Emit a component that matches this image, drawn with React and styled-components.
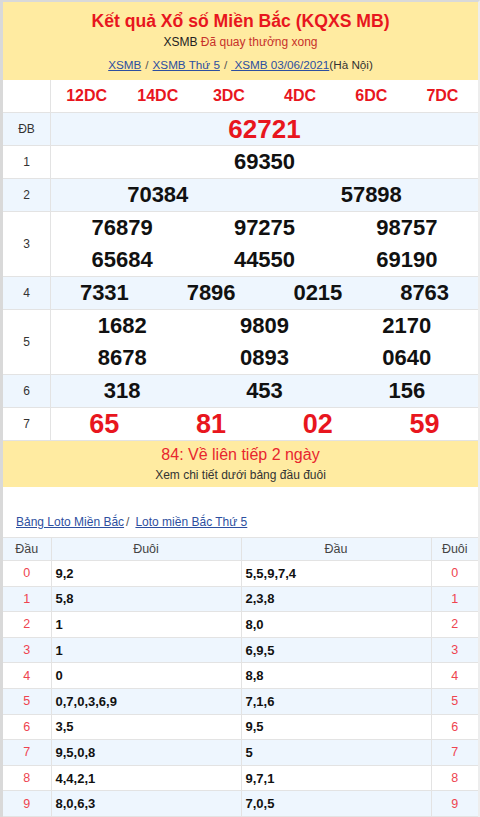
import React from 'react'
import styled, { createGlobalStyle } from 'styled-components'

const GlobalStyle = createGlobalStyle`
  html, body { margin: 0; padding: 0; background: #fff; }
  body { font-family: "Liberation Sans", Arial, sans-serif; color: #222; }
`

const Frame = styled.div`
  width: 480px;
  height: 817px;
  box-sizing: border-box;
  border-left: 3px solid #d9d9d9;
  border-top: 2px solid #d9d9d9;
  border-right: 2px solid #ededed;
  overflow: hidden;
`

const Head = styled.div`
  background: #ffeba1;
  text-align: center;
  padding: 8px 0 4px;
`

const Title = styled.h1`
  margin: 0;
  font-size: 17.6px;
  line-height: 22px;
  font-weight: bold;
  color: #e8161e;
`

const Sub = styled.div`
  font-size: 12px;
  line-height: 20px;
  color: #222;
  span { color: #c7312a; }
`

const Crumbs = styled.div`
  margin-top: 2px;
  font-size: 11.7px;
  line-height: 22px;
  color: #333;
  a { color: #2d4fa0; text-decoration: underline; }
  i { font-style: normal; color: #555; margin: 0 4px; }
`

const Table = styled.table`
  width: 100%;
  border-collapse: collapse;
  table-layout: fixed;
  td { border: 1px solid #e3e3e3; padding: 0; }
  tr:first-child td { border-top: none; }
  td:first-child { border-left: none; }
  td:last-child { border-right: none; }
`

const Row = styled.tr`
  background: ${p => (p.$alt ? '#eef6fe' : '#fff')};
`

const Label = styled.td`
  width: 47px;
  text-align: center;
  font-size: 12px;
  color: #333;
`

const Nums = styled.div`
  display: grid;
  grid-template-columns: repeat(${p => p.$cols}, 1fr);
  text-align: center;
  font-weight: bold;
  font-size: ${p => p.$size || 22}px;
  line-height: ${p => p.$lh || 32}px;
  color: ${p => (p.$red ? '#e8161e' : '#111')};
`

const Note = styled.div`
  background: #ffeba1;
  text-align: center;
  padding: 4px 0 1px;
  strong { display: block; font-weight: normal; font-size: 16px; line-height: 20px; color: #e8262e; }
  small { display: block; font-size: 12px; line-height: 21px; color: #333; }
`

const LotoLinks = styled.div`
  margin: 26px 0 6px 13px;
  font-size: 12px;
  line-height: 18px;
  color: #555;
  a { color: #2d4fa0; text-decoration: underline; }
  i { font-style: normal; margin: 0 6px 0 2px; }
`

const Loto = styled.table`
  width: 100%;
  border-collapse: collapse;
  table-layout: fixed;
  td, th { border: 1px solid #e3e3e3; padding: 0; font-size: 12.5px; }
  td:first-child, th:first-child { border-left: none; }
  td:last-child, th:last-child { border-right: none; }
  th { height: 22px; font-weight: normal; color: #444; background: #eef6fe; }
`

const LotoRow = styled.tr`
  background: ${p => (p.$alt ? '#eef6fe' : '#fff')};
  height: 25.6px;
`

const Idx = styled.td`
  text-align: center;
  color: #ee4450;
`

const Val = styled.td`
  padding-left: 4px !important;
  font-weight: bold;
  font-size: 13px !important;
  color: #111;
`

const dc = ['12DC', '14DC', '3DC', '4DC', '6DC', '7DC']

const prizes = [
  { label: 'ĐB', cols: 1, nums: ['62721'], red: true, size: 26, alt: true },
  { label: '1', cols: 1, nums: ['69350'] },
  { label: '2', cols: 2, nums: ['70384', '57898'], alt: true },
  { label: '3', cols: 3, nums: ['76879', '97275', '98757', '65684', '44550', '69190'] },
  { label: '4', cols: 4, nums: ['7331', '7896', '0215', '8763'], alt: true },
  { label: '5', cols: 3, nums: ['1682', '9809', '2170', '8678', '0893', '0640'] },
  { label: '6', cols: 3, nums: ['318', '453', '156'], alt: true },
  { label: '7', cols: 4, nums: ['65', '81', '02', '59'], red: true, size: 27 },
]

const loto = [
  ['9,2', '5,5,9,7,4'],
  ['5,8', '2,3,8'],
  ['1', '8,0'],
  ['1', '6,9,5'],
  ['0', '8,8'],
  ['0,7,0,3,6,9', '7,1,6'],
  ['3,5', '9,5'],
  ['9,5,0,8', '5'],
  ['4,4,2,1', '9,7,1'],
  ['8,0,6,3', '7,0,5'],
]

export default function App() {
  return (
    <>
      <GlobalStyle />
      <Frame>
        <Head>
          <Title>Kết quả Xổ số Miền Bắc (KQXS MB)</Title>
          <Sub>XSMB <span>Đã quay thưởng xong</span></Sub>
          <Crumbs>
            <a href="#">XSMB</a><i>/</i><a href="#">XSMB Thứ 5</a><i>/</i>
            <a href="#">&nbsp;XSMB 03/06/2021</a>(Hà Nội)
          </Crumbs>
        </Head>

        <Table>
          <tbody>
            <Row>
              <Label />
              <td>
                <Nums $cols={6} $size={16} $lh={32} $red>
                  {dc.map(d => <div key={d}>{d}</div>)}
                </Nums>
              </td>
            </Row>
            {prizes.map(p => (
              <Row key={p.label} $alt={p.alt}>
                <Label>{p.label}</Label>
                <td>
                  <Nums $cols={p.cols} $size={p.size} $red={p.red}>
                    {p.nums.map((n, i) => <div key={i}>{n}</div>)}
                  </Nums>
                </td>
              </Row>
            ))}
          </tbody>
        </Table>

        <Note>
          <strong>84: Về liên tiếp 2 ngày</strong>
          <small>Xem chi tiết dưới bảng đầu đuôi</small>
        </Note>

        <LotoLinks>
          <a href="#">Bảng Loto Miền Bắc</a><i>/</i><a href="#">Loto miền Bắc Thứ 5</a>
        </LotoLinks>

        <Loto>
          <colgroup>
            <col style={{ width: 48 }} />
            <col style={{ width: 190 }} />
            <col style={{ width: 190 }} />
            <col />
          </colgroup>
          <thead>
            <tr><th>Đầu</th><th>Đuôi</th><th>Đầu</th><th>Đuôi</th></tr>
          </thead>
          <tbody>
            {loto.map((r, i) => (
              <LotoRow key={i} $alt={i % 2 === 1}>
                <Idx>{i}</Idx>
                <Val>{r[0]}</Val>
                <Val>{r[1]}</Val>
                <Idx>{i}</Idx>
              </LotoRow>
            ))}
          </tbody>
        </Loto>
      </Frame>
    </>
  )
}
